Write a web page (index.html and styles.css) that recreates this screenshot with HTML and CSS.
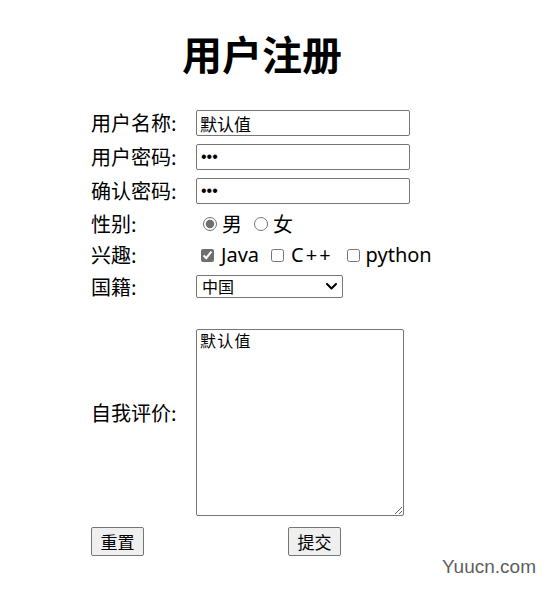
FILE: index.html
```html
<!DOCTYPE html>
<html lang="zh-CN">
<head>
<meta charset="utf-8">
<title>用户注册</title>
<link rel="stylesheet" href="styles.css">
</head>
<body>
<div class="page">
  <h1 class="title">用户注册</h1>
  <form class="form">
    <div class="row">
      <label class="label">用户名称:</label>
      <div class="field"><input class="text" type="text" value="默认值"></div>
    </div>
    <div class="row">
      <label class="label">用户密码:</label>
      <div class="field"><input class="text pwd" type="password" value="123"></div>
    </div>
    <div class="row">
      <label class="label">确认密码:</label>
      <div class="field"><input class="text pwd" type="password" value="123"></div>
    </div>
    <div class="row row-gender">
      <span class="label">性别:</span>
      <div class="field choices gender">
        <label class="choice"><input type="radio" name="sex" checked><span>男</span></label>
        <label class="choice"><input type="radio" name="sex"><span>女</span></label>
      </div>
    </div>
    <div class="row row-hobby">
      <span class="label">兴趣:</span>
      <div class="field choices hobby">
        <label class="choice"><input type="checkbox" checked><span>Java</span></label>
        <label class="choice"><input type="checkbox"><span class="cpp">C++</span></label>
        <label class="choice"><input type="checkbox"><span>python</span></label>
      </div>
    </div>
    <div class="row row-country">
      <label class="label">国籍:</label>
      <div class="field">
        <div class="select-wrap">
          <select class="select">
            <option>中国</option>
            <option>美国</option>
            <option>日本</option>
          </select>
          <svg class="chevron" width="11" height="7" viewBox="0 0 11 7" aria-hidden="true">
            <path d="M1 1 L5.5 5.5 L10 1" fill="none" stroke="#000" stroke-width="2" stroke-linecap="round" stroke-linejoin="round"/>
          </svg>
        </div>
      </div>
    </div>
    <div class="row row-intro">
      <label class="label label-intro">自我评价:</label>
      <div class="field"><textarea class="area">默认值</textarea></div>
    </div>
    <div class="row row-actions">
      <div class="label"><button class="btn" type="reset">重置</button></div>
      <div class="field field-center"><button class="btn" type="submit">提交</button></div>
    </div>
  </form>
  <div class="watermark">Yuucn.com</div>
</div>
</body>
</html>
```

FILE: styles.css
```css
html, body {
  margin: 0;
  padding: 0;
  background: #ffffff;
}

body {
  font-family: "Noto Sans", "Noto Sans CJK SC", sans-serif;
  color: #000000;
}

.page {
  position: relative;
  width: 549px;
  height: 596px;
  padding-top: 29px;
  box-sizing: border-box;
}

.title {
  margin: 0 0 0 91px;
  width: 342px;
  text-align: center;
  font-family: "Noto Sans CJK SC", sans-serif;
  font-size: 40px;
  line-height: 48px;
  font-weight: 700;
}

.form {
  margin: 33px 0 0 91px;
  width: 342px;
}

.row {
  display: flex;
  align-items: center;
  height: 26px;
  margin-top: 8px;
}

.row:first-child {
  margin-top: 0;
}

.row-gender {
  margin-top: 7px;
}

.row-hobby {
  margin-top: 5px;
}

.row-country {
  height: 23px;
  margin-top: 7px;
}

.row-intro {
  height: 187px;
  margin-top: 31px;
}

.row-actions {
  height: 29px;
  margin-top: 11px;
}

.label {
  width: 105px;
  flex: none;
  font-family: "Noto Sans CJK SC", sans-serif;
  font-size: 20px;
  line-height: 26px;
}

.label-intro {
  margin-bottom: 20px;
}

.field {
  width: 237px;
  flex: none;
  display: flex;
  align-items: center;
}

.field-center {
  justify-content: center;
}

.text {
  box-sizing: border-box;
  width: 214px;
  height: 26px;
  margin: 0;
  padding: 0 3px;
  border: 1px solid #767676;
  border-radius: 2px;
  font-family: "Noto Sans CJK SC", sans-serif;
  font-size: 17px;
  color: #000;
  outline: none;
}

.pwd {
  font-family: "Liberation Sans", Arial, sans-serif;
  font-size: 16px;
  padding-left: 4px;
}

.choices {
  font-size: 20px;
  line-height: 26px;
}

.choice {
  display: flex;
  align-items: center;
}

.choice input {
  width: 13px;
  height: 13px;
  margin: 0;
  accent-color: #6e6e6e;
}

.gender .choice input {
  width: 14px;
  height: 14px;
}

.gender {
  padding-left: 7px;
}

.gender .choice span {
  margin-left: 5px;
  font-family: "Noto Sans CJK SC", sans-serif;
}

.gender .choice + .choice {
  margin-left: 12px;
}

.hobby {
  padding-left: 5px;
}

.hobby .choice span {
  margin-left: 7px;
}

.hobby .choice + .choice {
  margin-left: 12px;
}

.hobby .choice:last-child {
  margin-left: 14px;
}

.hobby .choice:last-child span {
  margin-left: 6px;
}

.cpp {
  letter-spacing: 2px;
}

.select-wrap {
  position: relative;
  width: 147px;
  height: 23px;
}

.select {
  box-sizing: border-box;
  width: 147px;
  height: 23px;
  margin: 0;
  padding: 0 20px 0 5px;
  -webkit-appearance: none;
  appearance: none;
  font-family: "Noto Sans CJK SC", sans-serif;
  font-size: 16px;
  line-height: 21px;
  color: #000;
  border: 1px solid #767676;
  border-radius: 2px;
  background: #fff;
}

.chevron {
  position: absolute;
  right: 6px;
  top: 8px;
  pointer-events: none;
}

.area {
  box-sizing: border-box;
  width: 208px;
  height: 187px;
  margin: 0;
  padding: 0 3px;
  border: 1px solid #767676;
  border-radius: 2px;
  font-family: "Noto Sans CJK SC", sans-serif;
  font-size: 16px;
  line-height: 20px;
  letter-spacing: 1.3px;
  color: #000;
  outline: none;
}

.btn {
  box-sizing: border-box;
  width: 53px;
  height: 29px;
  margin: 0;
  padding: 0;
  font-family: "Noto Sans CJK SC", sans-serif;
  font-size: 17px;
  color: #000;
  background: #efefef;
  border: 1px solid #767676;
  border-radius: 2px;
}

.watermark {
  position: absolute;
  right: 13px;
  bottom: 18px;
  font-family: "Liberation Sans", Arial, sans-serif;
  font-size: 19px;
  line-height: 22px;
  color: #5e5e5e;
}
```
